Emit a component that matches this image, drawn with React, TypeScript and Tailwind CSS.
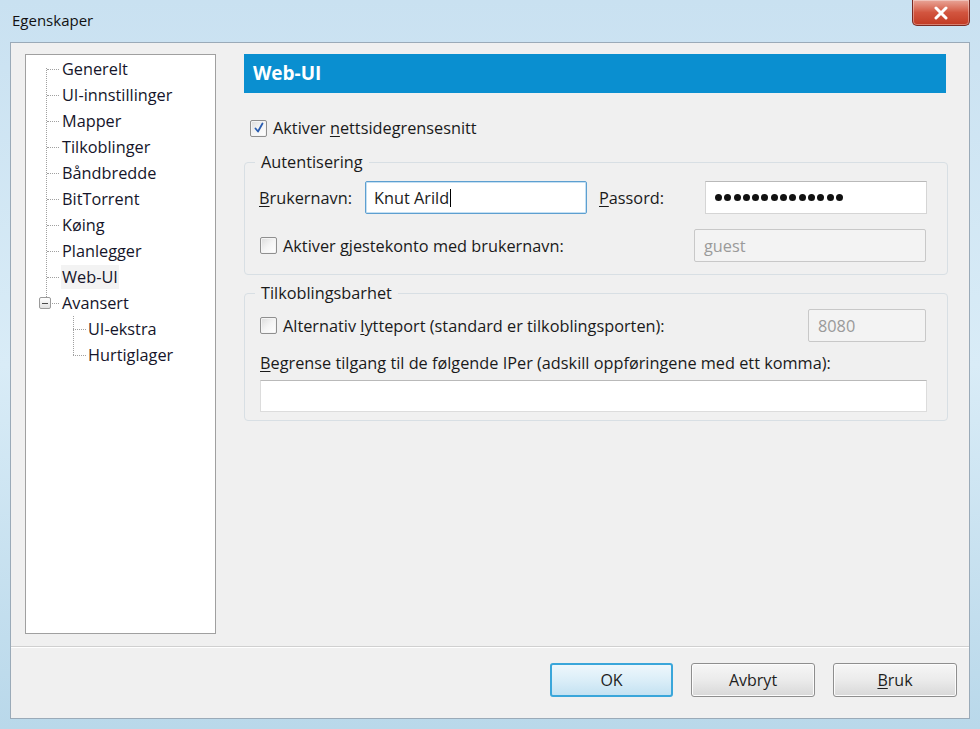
import React from "react";

const font = { fontFamily: '"Open Sans", "Noto Sans", sans-serif' };

function Check({ checked }: { checked?: boolean }) {
  return (
    <span className="relative inline-flex h-[17px] w-[17px] shrink-0 items-center justify-center rounded-[2px] border border-[#8f8f8f] bg-gradient-to-br from-[#dcdcdc] via-[#f4f4f4] to-[#ffffff] shadow-[inset_0_0_0_1px_#f4f4f4]">
      {checked && (
        <svg width="12" height="12" viewBox="0 0 12 12">
          <path d="M2.5 6.5 L5 9.5 L9.5 1.5" fill="none" stroke="#2a5db0" strokeWidth="1.8" strokeLinecap="round" strokeLinejoin="round" />
        </svg>
      )}
    </span>
  );
}

function U({ c }: { c: string }) {
  return <span className="underline underline-offset-2 decoration-1">{c}</span>;
}

const treeItems = [
  "Generelt",
  "UI-innstillinger",
  "Mapper",
  "Tilkoblinger",
  "Båndbredde",
  "BitTorrent",
  "Køing",
  "Planlegger",
  "Web-UI",
];

function Tree() {
  return (
    <div className="relative h-[580px] w-[191px] shrink-0 border border-[#a0a0a0] bg-white text-[16.3px] text-[#15152a]">
      <div className="relative pl-[35px] pt-[1px]">
        <div className="absolute left-[20px] top-[13px] h-[233px] border-l border-dotted border-[#a0a0a0]" />
        {treeItems.map((t) => (
          <div key={t} className="relative flex h-[26px] items-center">
            <div className="absolute left-[-14px] top-[13px] w-[12px] border-t border-dotted border-[#a0a0a0]" />
            <span className={t === "Web-UI" ? "bg-[#f3f3f3] px-[1px]" : "px-[1px]"}>{t}</span>
          </div>
        ))}
        <div className="relative flex h-[26px] items-center">
          <div className="absolute left-[-22px] top-[7px] flex h-[12px] w-[12px] items-center justify-center rounded-[2px] border border-[#9a9a9a] bg-gradient-to-b from-white to-[#e0e0e0]">
            <div className="h-[1px] w-[6px] bg-[#4a4a4a]" />
          </div>
          <div className="absolute left-[-9px] top-[13px] w-[7px] border-t border-dotted border-[#a0a0a0]" />
          <span className="px-[1px]">Avansert</span>
        </div>
        <div className="relative pl-[26px]">
          <div className="absolute left-[12px] top-0 h-[39px] border-l border-dotted border-[#a0a0a0]" />
          {["UI-ekstra", "Hurtiglager"].map((t) => (
            <div key={t} className="relative flex h-[26px] items-center">
              <div className="absolute left-[-14px] top-[13px] w-[13px] border-t border-dotted border-[#a0a0a0]" />
              <span className="px-[1px]">{t}</span>
            </div>
          ))}
        </div>
      </div>
    </div>
  );
}

function Group({ title, children, h }: { title: string; children: React.ReactNode; h: string }) {
  return (
    <div className={`relative rounded-[4px] border border-[#d8dfe4] ${h}`}>
      <div className="absolute left-[10px] top-[-12px] bg-[#f0f0f0] px-[6px] leading-[22px] text-[#1a1a1a]">
        {title}
      </div>
      {children}
    </div>
  );
}

function Dots({ n }: { n: number }) {
  return (
    <div className="flex gap-[2.3px]">
      {Array.from({ length: n }).map((_, i) => (
        <span key={i} className="h-[7px] w-[7px] rounded-full bg-[#111]" />
      ))}
    </div>
  );
}

export default function App() {
  return (
    <div
      className="flex h-[729px] w-[980px] flex-col overflow-hidden bg-gradient-to-b from-[#c9e1f1] via-[#d9ecf7] to-[#b9d8ea]"
      style={font}
    >
      {/* title bar */}
      <div className="relative flex h-[42px] shrink-0 items-start justify-between">
        <div className="pl-[12px] pt-[9px] text-[15px] text-[#111]">Egenskaper</div>
        <div className="mr-[10px] mt-0 flex h-[26px] w-[58px] items-center justify-center rounded-b-[5px] border border-t-0 border-[#7a2a22] bg-gradient-to-b from-[#e8a598] via-[#d2553f] to-[#c23a22] shadow-[inset_0_0_0_1px_rgba(255,255,255,0.35)]">
          <svg width="16" height="14" viewBox="0 0 16 14">
            <path d="M3 2 L13 12 M13 2 L3 12" stroke="#ffffff" strokeWidth="3" strokeLinecap="round" />
          </svg>
        </div>
      </div>

      {/* client */}
      <div className="mx-[10px] mb-[10px] flex flex-1 flex-col border border-[#9aaab8] bg-[#f0f0f0]">
        <div className="flex pl-[14px] pr-[21px] pt-[11px]">
          <Tree />
          <div className="ml-[28px] flex flex-1 flex-col text-[16.3px] text-[#1a1a1a]">
            <div className="flex h-[39px] w-[702px] items-center bg-[#0a8fd0] pl-[9px] text-[19px] font-bold text-white">
              Web-UI
            </div>
            <div className="mt-[23px] flex items-center pl-[6px]">
              <Check checked />
              <span className="ml-[6px]">
                Aktiver <U c="n" />ettsidegrensesnitt
              </span>
            </div>

            <div className="mt-[22px]">
              <Group title="Autentisering" h="h-[113px]">
                <div className="flex items-center pl-[14px] pt-[18px]">
                  <span className="w-[106px]">
                    <U c="B" />rukernavn:
                  </span>
                  <div className="flex h-[33px] w-[222px] items-center rounded-[2px] border border-[#5d9fd0] bg-white pl-[8px] shadow-[inset_0_0_0_1px_#c5e0f3]">
                    Knut Arild<span className="ml-[1px] h-[18px] w-[1px] bg-black" />
                  </div>
                  <span className="ml-[12px] w-[106px]">
                    <U c="P" />assord:
                  </span>
                  <div className="flex h-[33px] w-[222px] items-center border border-[#d5d5d5] border-t-[#b9b9b9] bg-white pl-[9px]">
                    <Dots n={14} />
                  </div>
                </div>
                <div className="flex items-center pl-[15px] pt-[15px]">
                  <Check />
                  <span className="ml-[6px]">
                    Aktiver <U c="g" />jestekonto med brukernavn:
                  </span>
                  <div className="ml-auto mr-[21px] flex h-[33px] w-[232px] items-center rounded-[2px] border border-[#c8c8c8] bg-[#f3f3f3] pl-[9px] text-[#9a9a9a]">
                    guest
                  </div>
                </div>
              </Group>
            </div>

            <div className="mt-[18px]">
              <Group title="Tilkoblingsbarhet" h="h-[128px]">
                <div className="flex items-center pl-[15px] pt-[15px]">
                  <Check />
                  <span className="ml-[6px]">
                    Alternativ <U c="l" />ytteport (standard er tilkoblingsporten):
                  </span>
                  <div className="ml-auto mr-[21px] flex h-[33px] w-[118px] items-center rounded-[2px] border border-[#c8c8c8] bg-[#f3f3f3] pl-[9px] text-[#9a9a9a]">
                    8080
                  </div>
                </div>
                <div className="pl-[15px] pt-[9px]">
                  <U c="B" />egrense tilgang til de følgende IPer (adskill oppføringene med ett komma):
                </div>
                <div className="ml-[15px] mr-[20px] mt-[4px] h-[32px] border border-[#dcdcdc] border-t-[#b9b9b9] bg-white" />
              </Group>
            </div>
          </div>
        </div>

        <div className="flex-1" />
        <div className="border-t border-[#d0d0d0] shadow-[0_1px_0_#ffffff]" />
        <div className="flex h-[71px] items-start justify-end gap-[18px] pr-[12px] pt-[16px]">
          <button className="h-[34px] w-[123px] rounded-[3px] border-2 border-[#3aa6da] bg-gradient-to-b from-[#eef7fc] via-[#dbeef8] to-[#c4e2f2] text-[16px] text-[#1e1e1e]">
            OK
          </button>
          <button className="h-[34px] w-[124px] rounded-[3px] border border-[#8e8e8e] bg-gradient-to-b from-[#f6f6f6] via-[#ebebeb] to-[#d8d8d8] text-[16px] text-[#1e1e1e] shadow-[inset_0_0_0_1px_#fcfcfc]">
            Avbryt
          </button>
          <button className="h-[34px] w-[124px] rounded-[3px] border border-[#8e8e8e] bg-gradient-to-b from-[#f6f6f6] via-[#ebebeb] to-[#d8d8d8] text-[16px] text-[#1e1e1e] shadow-[inset_0_0_0_1px_#fcfcfc]">
            <U c="B" />ruk
          </button>
        </div>
      </div>
    </div>
  );
}
